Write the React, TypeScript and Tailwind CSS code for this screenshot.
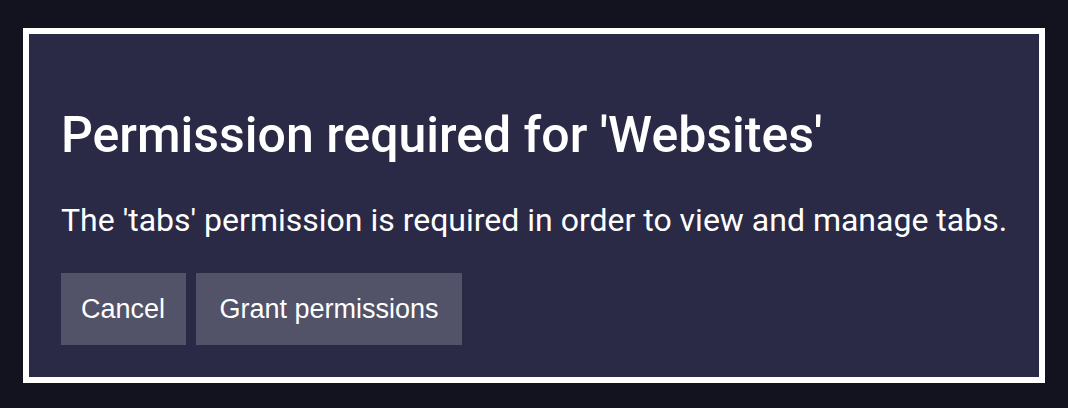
export default function App() {
  return (
    <div className="min-h-screen bg-[#13131f] px-[23px] pt-[28px] pb-[25px]">
      {/* Permission dialog */}
      <div className="border-[6px] border-white bg-[#2a2946] px-[32px] pt-[71px] pb-[32px] text-white">
        <h1 className="font-['Roboto',sans-serif] text-[50px] leading-[60px] font-medium">
          Permission required for 'Websites'
        </h1>
        <p className="mt-[35px] whitespace-nowrap font-['Roboto',sans-serif] text-[32px] leading-[40px]">
          The 'tabs' permission is required in order to view and manage tabs.
        </p>
        <div className="mt-[33px] flex gap-[10px] font-['Liberation_Sans',Arial,sans-serif] text-[27px] leading-[32px]">
          <button className="bg-[#525269] pl-[20px] pr-[21px] py-[20px] text-white">Cancel</button>
          <button className="bg-[#525269] px-[23.5px] py-[20px] text-white">Grant permissions</button>
        </div>
      </div>
    </div>
  );
}
